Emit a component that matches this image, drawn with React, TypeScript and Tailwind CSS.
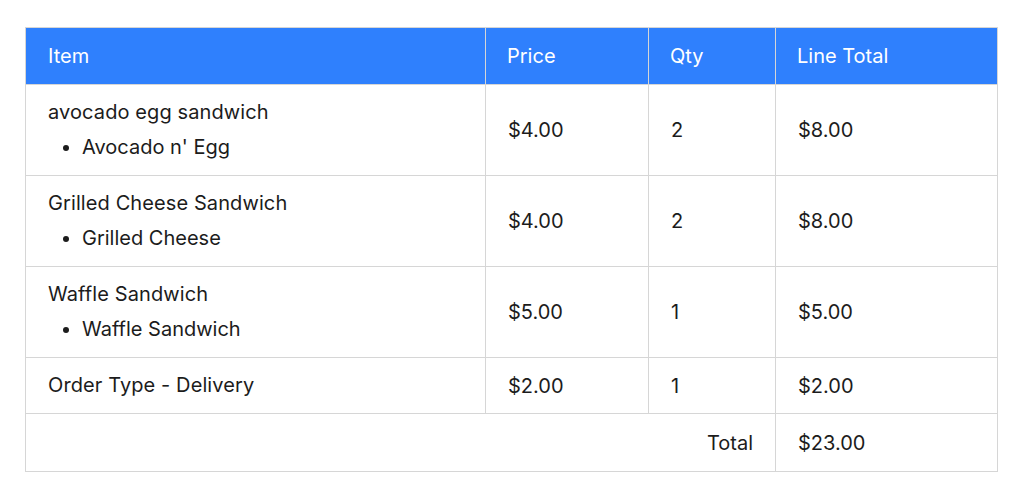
import React from 'react';

interface LineItem {
  name: string;
  options: string[];
  price: string;
  qty: number;
  total: string;
}

const items: LineItem[] = [
  { name: 'avocado egg sandwich', options: ["Avocado n' Egg"], price: '$4.00', qty: 2, total: '$8.00' },
  { name: 'Grilled Cheese Sandwich', options: ['Grilled Cheese'], price: '$4.00', qty: 2, total: '$8.00' },
  { name: 'Waffle Sandwich', options: ['Waffle Sandwich'], price: '$5.00', qty: 1, total: '$5.00' },
  { name: 'Order Type - Delivery', options: [], price: '$2.00', qty: 1, total: '$2.00' },
];

const cell = 'border border-[#d6d6d6] px-[22px] align-middle';

export default function App() {
  return (
    <div className="min-h-screen bg-white pt-[27px] pl-[25px] font-['Inter',sans-serif] text-[20px] text-[#1c1c1c]">
      <table className="w-[972px] table-fixed border-collapse">
        <colgroup>
          <col className="w-[460px]" />
          <col className="w-[163px]" />
          <col className="w-[127px]" />
          <col className="w-[222px]" />
        </colgroup>
        <thead>
          <tr className="h-[57px] bg-[#2f80fd] text-left text-white">
            <th className="border border-[#d6d6d6] px-[22px] font-normal">Item</th>
            <th className="border border-[#d6d6d6] px-[21px] font-normal">Price</th>
            <th className="border border-[#d6d6d6] px-[21px] font-normal">Qty</th>
            <th className="border border-[#d6d6d6] px-[21px] font-normal">Line Total</th>
          </tr>
        </thead>
        <tbody>
          {items.map((item) => (
            <tr key={item.name} className={item.options.length ? 'h-[91px]' : 'h-[56px]'}>
              <td className={cell}>
                <div className="leading-[35px] tracking-[0.1px]">{item.name}</div>
                {item.options.length > 0 && (
                  <ul className="list-disc pl-[34px] leading-[35px]">
                    {item.options.map((o) => (
                      <li key={o}>{o}</li>
                    ))}
                  </ul>
                )}
              </td>
              <td className={cell}>{item.price}</td>
              <td className={cell}>{item.qty}</td>
              <td className={cell}>{item.total}</td>
            </tr>
          ))}
          <tr className="h-[58px]">
            <td colSpan={3} className={cell + ' text-right'}>
              Total
            </td>
            <td className={cell}>$23.00</td>
          </tr>
        </tbody>
      </table>
    </div>
  );
}
